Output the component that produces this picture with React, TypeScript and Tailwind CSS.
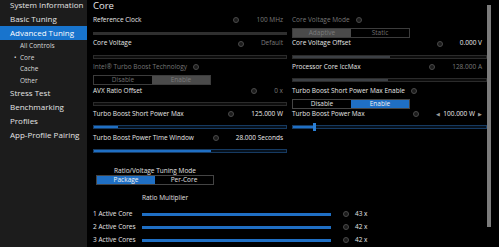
import React from "react";

function Info({ className = "" }: { className?: string }) {
  return (
    <span
      className={
        "inline-block h-[6px] w-[6px] shrink-0 rounded-full border border-[#4a4a4a] bg-[#1c1c1c] " +
        className
      }
    />
  );
}

type SettingProps = {
  label: string;
  value?: React.ReactNode;
  dimLabel?: boolean;
  dimValue?: boolean;
  labelIcon?: boolean;
  right?: boolean;
  children?: React.ReactNode;
};

function Setting({ label, value, dimLabel, dimValue, labelIcon, right, children }: SettingProps) {
  return (
    <div className="flex h-[23.6px] flex-col">
      <div className={"flex h-[11px] items-center " + (right ? "pr-[5px]" : "pr-[4px]")}>
        <span className={dimLabel ? "text-[#767676]" : "text-[#e6e6e6]"}>{label}</span>
        {labelIcon && <Info className="ml-[6px]" />}
        <span className="flex-1" />
        {value !== undefined && (
          <>
            <Info />
            <span className={"ml-[17px] " + (dimValue ? "text-[#7a7a7a]" : "text-[#ececec]")}>{value}</span>
          </>
        )}
      </div>
      <div className="flex-1">{children}</div>
    </div>
  );
}

function GraySlider({ fill }: { fill?: number }) {
  return (
    <div className="mt-[5.5px] h-[4px] border border-[#2b2b2b] bg-[#0d0d0d]">
      {fill !== undefined && <div className="h-full bg-[#3b3f44]" style={{ width: `${fill}%` }} />}
    </div>
  );
}

function BlueSlider({ fill, thumb }: { fill: number; thumb?: boolean }) {
  return (
    <div className="relative mt-[5.5px] h-[4px] border border-[#163a61] bg-[#06111d]">
      <div className="h-full bg-[#1f6fc4]" style={{ width: `${fill}%` }} />
      {thumb && (
        <div
          className="absolute top-[-3px] h-[8px] w-[3px] bg-[#2a7fd6]"
          style={{ left: `calc(${fill}% - 1px)` }}
        />
      )}
    </div>
  );
}

function Segmented({ a, b, active, disabled }: { a: string; b: string; active: 0 | 1; disabled?: boolean }) {
  const on = disabled ? "bg-[#4a4a4a] text-[#7c7c7c]" : "bg-[#1f6fc4] text-[#f2f2f2]";
  const off = disabled ? "text-[#6e6e6e]" : "text-[#e0e0e0]";
  return (
    <div className={"mt-[2.5px] flex h-[10px] w-[118px] border " + (disabled ? "border-[#3c3c3c]" : "border-[#444]")}>
      <div className={"flex w-1/2 items-center justify-center " + (active === 0 ? on : off)}>{a}</div>
      <div className={"flex w-1/2 items-center justify-center " + (active === 1 ? on : off)}>{b}</div>
    </div>
  );
}

function CoreRow({ label, value }: { label: string; value: string }) {
  return (
    <div className="flex h-[13px] items-center">
      <span className="w-[49px] text-[#e6e6e6]">{label}</span>
      <div className="h-[3px] w-[189px] bg-[#1f6fc4]" />
      <Info className="ml-[12px]" />
      <span className="ml-[6px] text-[#e6e6e6]">{value}</span>
    </div>
  );
}

export default function App() {
  const side = "flex h-[13.8px] items-center pl-[10px] text-[8px] text-[#e4e4e4]";
  const sub = "flex h-[11.4px] items-center pl-[20px] text-[6.5px] text-[#d8d8d8]";
  return (
    <div className="flex h-[247px] w-[499px] overflow-hidden bg-black font-['Open_Sans',sans-serif] leading-none">
      <div className="w-[87px] shrink-0 bg-[#1c1c1c]">
        <div className="-mt-[1.5px]">
          <div className={side}>System Information</div>
          <div className={side}>Basic Tuning</div>
          <div className={side + " bg-[#1874cd] text-white"}>Advanced Tuning</div>
          <div className="pt-[1px]">
            <div className={sub}>All Controls</div>
            <div className={sub + " relative"}>
              <span className="absolute left-[14px]">•</span>Core
            </div>
            <div className={sub}>Cache</div>
            <div className={sub}>Other</div>
          </div>
          <div className={side}>Stress Test</div>
          <div className={side}>Benchmarking</div>
          <div className={side}>Profiles</div>
          <div className={side}>App-Profile Pairing</div>
        </div>
      </div>

      <div className="flex flex-1">
        <div className="w-[400px] pl-[6px] text-[6.5px]">
          <div className="flex h-[11px] items-center text-[9.5px] text-[#e6e6e6]">Core</div>
          <div className="mt-[3.5px] grid grid-cols-[194px_195px] gap-x-[5px]">
            <div>
              <Setting label="Reference Clock" value="100 MHz" dimValue>
                <div className="mt-[6px] h-[3px] bg-[#2f2f2f]" />
              </Setting>
              <Setting label="Core Voltage" value="Default" dimValue>
                <GraySlider />
              </Setting>
              <Setting label="Intel® Turbo Boost Technology" dimLabel labelIcon>
                <Segmented a="Disable" b="Enable" active={1} disabled />
              </Setting>
              <Setting label="AVX Ratio Offset" value="0 x" dimValue>
                <GraySlider />
              </Setting>
              <Setting label="Turbo Boost Short Power Max" value="125.000 W">
                <BlueSlider fill={12.5} />
              </Setting>
              <Setting label="Turbo Boost Power Time Window" value="28.000 Seconds">
                <BlueSlider fill={61} />
              </Setting>
            </div>
            <div>
              <Setting label="Core Voltage Mode" dimLabel labelIcon right>
                <Segmented a="Adaptive" b="Static" active={0} disabled />
              </Setting>
              <Setting label="Core Voltage Offset" value="0.000 V" right>
                <GraySlider fill={50} />
              </Setting>
              <Setting label="Processor Core IccMax" value="128.000 A" dimValue right>
                <GraySlider fill={49} />
              </Setting>
              <Setting label="Turbo Boost Short Power Max Enable" labelIcon right>
                <Segmented a="Disable" b="Enable" active={1} />
              </Setting>
              <Setting
                label="Turbo Boost Power Max"
                right
                value={
                  <span className="flex items-center gap-[3px]">
                    <span className="text-[5px] text-[#9a9a9a]">◀</span>
                    100.000 W
                    <span className="text-[5px] text-[#9a9a9a]">▶</span>
                  </span>
                }
              >
                <BlueSlider fill={11} thumb />
              </Setting>
            </div>
          </div>

          <div className="mt-[11px] w-[121px] pl-[3px]">
            <div className="flex h-[8px] items-center justify-center text-[#e0e0e0]">Ratio/Voltage Tuning Mode</div>
            <div className="-mt-[2.5px]">
              <Segmented a="Package" b="Per-Core" active={0} />
            </div>
          </div>
          <div className="mt-[8px] flex h-[10px] items-center pl-[49px] text-[#e0e0e0]">Ratio Multiplier</div>
          <div className="mt-[4.5px]">
            <CoreRow label="1 Active Core" value="43 x" />
            <CoreRow label="2 Active Cores" value="42 x" />
            <CoreRow label="3 Active Cores" value="42 x" />
          </div>
        </div>
        <div className="pt-[5px]">
          <div className="h-[222px] w-[4px] bg-[#7c7c7c]" />
        </div>
      </div>
    </div>
  );
}
